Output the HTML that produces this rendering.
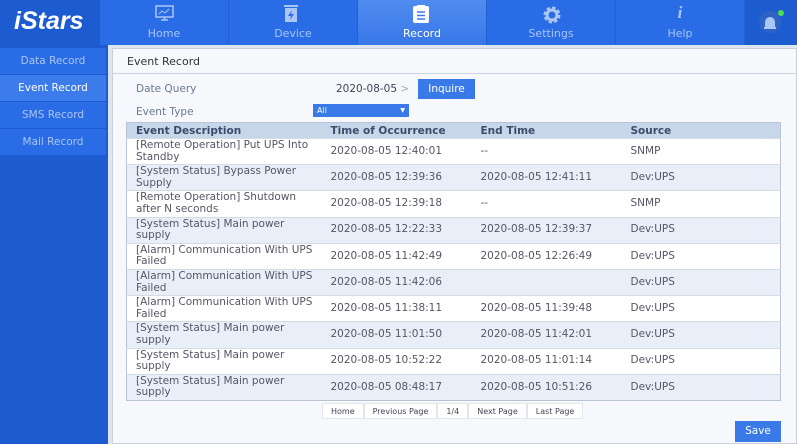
<!DOCTYPE html><html><head><style>
*{margin:0;padding:0;box-sizing:border-box}
body{width:797px;height:444px;overflow:hidden;background:#dfe5ee;font-family:"DejaVu Sans","Liberation Sans",sans-serif;position:relative}
.top{position:absolute;left:0;top:0;width:797px;height:45px;background:#2a6be6}
.logo{position:absolute;left:0;top:0;width:100px;height:45px;background:#1d5bd0;color:#fff;font:italic bold 25px "Liberation Sans",sans-serif;padding:7px 0 0 14px}
.nav{position:absolute;top:0;height:45px;width:129px;color:#a9c6f5;font-size:11px;text-align:center;border-right:1px solid #2560d0}
.nav span{position:absolute;left:0;right:0;top:27px}
.nav svg{position:absolute;left:55px;top:5px}
.sel{background:linear-gradient(#4f8cf0,#3977e8);color:#fff}
.alarm{position:absolute;left:745px;top:0;width:52px;height:45px;background:#1d5bd0}
.side{position:absolute;left:0;top:45px;width:108px;height:399px;background:#1d5bd0}
.si{position:absolute;left:0;width:106px;height:26px;background:#2a6be6;color:#a9c6f5;font-size:10.5px;text-align:center;line-height:26px}
.si.on{background:#3c7cea;color:#fff}
.panel{position:absolute;left:112px;top:48px;width:685px;height:396px;background:#f6f8fc;border:1px solid #c8d0dc}
.h{position:absolute;left:14px;top:6px;font-size:11px;color:#333}
.hl{position:absolute;left:0;right:0;top:24px;border-top:1px solid #c9d3e2}
.lbl{position:absolute;font-size:10.5px;color:#6a7a90}
table{position:absolute;left:13px;top:73px;width:655px;border-collapse:collapse;font-size:10.5px;color:#556}
th{background:#c8d6ea;height:16px;text-align:left;padding-left:9px;font-size:10.5px;color:#3a4c6a;font-weight:bold}
td{height:26.2px;padding-left:9px;line-height:11.5px;border-top:1px solid #d4dbe6}
td div{width:177px}
tr:nth-child(even) td{background:#fff}
tr:nth-child(odd) td{background:#e9eff9}
table{border:1px solid #b8c4d6}
.pg{position:absolute;top:354px;left:209px;display:flex;font-size:8px;color:#445}
.pg div{background:#fff;border:1px solid #e3e6ec;height:16px;line-height:15px;padding:0 8px}
.btn{position:absolute;background:#3a7ae8;color:#fff;font-size:10.5px;text-align:center}
</style></head><body>
<div class="top"></div>
<div class="logo">iStars</div>
<div class="nav" style="left:100px"><svg width="19" height="17" viewBox="0 0 19 17"><rect x="1" y="1" width="17" height="11" fill="none" stroke="#a9c6f5" stroke-width="1.5"/><path d="M4 9l3-3 3 2 4-4" stroke="#a9c6f5" fill="none"/><path d="M6 15h7M9.5 12v3" stroke="#a9c6f5" stroke-width="1.5"/></svg><span>Home</span></div>
<div class="nav" style="left:229px"><svg width="14" height="18" viewBox="0 0 14 18"><rect x="0" y="0" width="14" height="2" fill="#a9c6f5"/><rect x="1" y="3" width="12" height="14" fill="#a9c6f5"/><path d="M8 5l-4 6h3l-1 4 4-6H7z" fill="#2a6be6"/></svg><span>Device</span></div>
<div class="nav sel" style="left:358px"><svg width="16" height="18" viewBox="0 0 16 18"><rect x="0" y="1" width="16" height="17" rx="2" fill="#fff"/><rect x="4" y="0" width="8" height="3" fill="#fff"/><path d="M4 7h8M4 10.5h8M4 14h8" stroke="#3a78e8" stroke-width="1.6"/></svg><span>Record</span></div>
<div class="nav" style="left:487px"><svg width="20" height="20" viewBox="0 0 20 20"><circle cx="10" cy="10" r="6.5" fill="none" stroke="#a9c6f5" stroke-width="4" stroke-dasharray="3 2.1"/><circle cx="10" cy="10" r="5" fill="none" stroke="#a9c6f5" stroke-width="3"/></svg><span>Settings</span></div>
<div class="nav" style="left:616px"><span style="top:3px;font:italic bold 17px 'Liberation Serif',serif;color:#a9c6f5">i</span><span>Help</span></div>
<div class="alarm"><svg width="30" height="30" viewBox="0 0 30 30" style="position:absolute;left:11px;top:7px"><circle cx="14" cy="15" r="11" fill="#2e63c4"/><path d="M9 20v-5a5 5 0 0 1 10 0v5z" fill="#a9c6f5"/><rect x="8" y="20" width="12" height="2" fill="#a9c6f5"/><circle cx="25" cy="6" r="3" fill="#4ce04c"/></svg></div>
<div class="side"></div>
<div class="si" style="top:48px">Data Record</div>
<div class="si on" style="top:75px">Event Record</div>
<div class="si" style="top:102px">SMS Record</div>
<div class="si" style="top:129px">Mail Record</div>
<div class="panel">
<div class="h">Event Record</div><div class="hl"></div>
<div class="lbl" style="left:23px;top:34px">Date Query</div>
<div class="lbl" style="left:223px;top:34px;color:#445">2020-08-05 <span style="color:#aab">&gt;</span></div>
<div class="btn" style="left:305px;top:30px;width:57px;height:20px;line-height:20px">Inquire</div>
<div class="lbl" style="left:23px;top:57px">Event Type</div>
<div class="btn" style="left:200px;top:55px;width:96px;height:13px;font-size:8px;text-align:left;padding-left:4px;line-height:13px">All<span style="position:absolute;right:4px;font-size:6px">▼</span></div>
<table>
<tr><th style="width:195px">Event Description</th><th style="width:150px">Time of Occurrence</th><th style="width:150px">End Time</th><th>Source</th></tr>
<tr><td><div>[Remote Operation] Put UPS Into Standby</div></td><td>2020-08-05 12:40:01</td><td>--</td><td>SNMP</td></tr>
<tr><td><div>[System Status] Bypass Power Supply</div></td><td>2020-08-05 12:39:36</td><td>2020-08-05 12:41:11</td><td>Dev:UPS</td></tr>
<tr><td><div>[Remote Operation] Shutdown after N seconds</div></td><td>2020-08-05 12:39:18</td><td>--</td><td>SNMP</td></tr>
<tr><td><div>[System Status] Main power<br>supply</div></td><td>2020-08-05 12:22:33</td><td>2020-08-05 12:39:37</td><td>Dev:UPS</td></tr>
<tr><td><div>[Alarm] Communication With UPS Failed</div></td><td>2020-08-05 11:42:49</td><td>2020-08-05 12:26:49</td><td>Dev:UPS</td></tr>
<tr><td><div>[Alarm] Communication With UPS Failed</div></td><td>2020-08-05 11:42:06</td><td></td><td>Dev:UPS</td></tr>
<tr><td><div>[Alarm] Communication With UPS Failed</div></td><td>2020-08-05 11:38:11</td><td>2020-08-05 11:39:48</td><td>Dev:UPS</td></tr>
<tr><td><div>[System Status] Main power<br>supply</div></td><td>2020-08-05 11:01:50</td><td>2020-08-05 11:42:01</td><td>Dev:UPS</td></tr>
<tr><td><div>[System Status] Main power<br>supply</div></td><td>2020-08-05 10:52:22</td><td>2020-08-05 11:01:14</td><td>Dev:UPS</td></tr>
<tr><td><div>[System Status] Main power<br>supply</div></td><td>2020-08-05 08:48:17</td><td>2020-08-05 10:51:26</td><td>Dev:UPS</td></tr>
</table>
<div class="pg"><div>Home</div><div>Previous Page</div><div>1/4</div><div>Next Page</div><div>Last Page</div></div>
<div class="btn" style="left:622px;top:372px;width:46px;height:21px;line-height:21px">Save</div>
</div>
</body></html>
